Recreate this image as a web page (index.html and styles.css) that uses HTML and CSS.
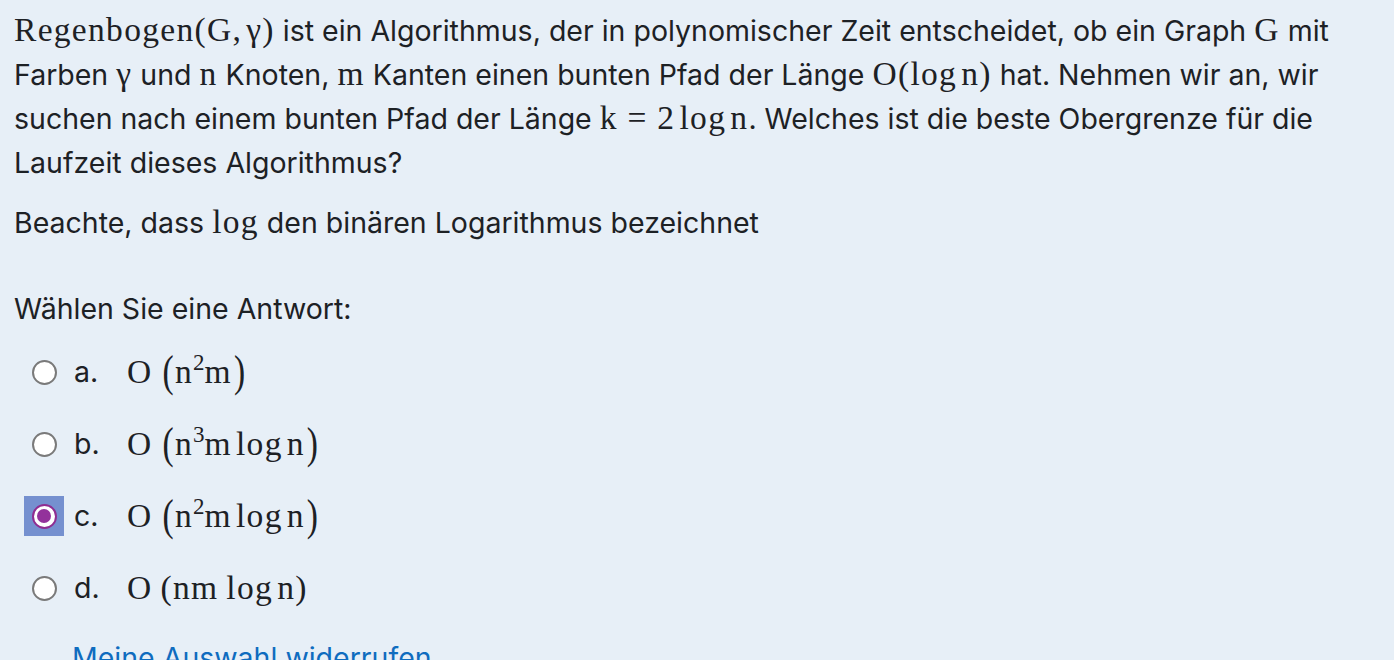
FILE: index.html
```html
<!DOCTYPE html>
<html lang="de">
<head>
<meta charset="utf-8">
<link rel="stylesheet" href="styles.css">
</head>
<body>
<div class="q">
  <p class="text"><span class="m">Regenbogen(G,&#8202;γ)</span> ist ein Algorithmus, der in polynomischer Zeit entscheidet, ob ein Graph <span class="m">G</span> mit Farben <span class="m">γ</span> und <span class="m">n</span> Knoten, <span class="m">m</span> Kanten einen bunten Pfad der Länge <span class="m">O(log&#8202;n)</span> hat. Nehmen wir an, wir suchen nach einem bunten Pfad der Länge <span class="m">k&#8197;=&#8197;2&#8202;log&#8202;n</span>. Welches ist die beste Obergrenze für die Laufzeit dieses Algorithmus?</p>
  <p class="text note">Beachte, dass <span class="m">log</span> den binären Logarithmus bezeichnet</p>
  <div class="prompt">Wählen Sie eine Antwort:</div>
  <div class="answers">
    <div class="opt"><span class="radio"></span><span class="lbl">a.</span><span class="m expr">O&#8201;<span class="paren">(</span>n<sup>2</sup>m<span class="paren">)</span></span></div>
    <div class="opt"><span class="radio"></span><span class="lbl">b.</span><span class="m expr">O&#8201;<span class="paren">(</span>n<sup>3</sup>m&#8202;log&#8202;n<span class="paren">)</span></span></div>
    <div class="opt"><span class="focus"><span class="radio checked"></span></span><span class="lbl">c.</span><span class="m expr">O&#8201;<span class="paren">(</span>n<sup>2</sup>m&#8202;log&#8202;n<span class="paren">)</span></span></div>
    <div class="opt"><span class="radio"></span><span class="lbl">d.</span><span class="m expr">O&#8201;(nm&#8201;log&#8202;n)</span></div>
  </div>
  <a class="reset" href="#">Meine Auswahl widerrufen</a>
</div>
</body>
</html>
```

FILE: styles.css
```css
html, body {
  margin: 0;
  padding: 0;
  background: #e7eff7;
}
body {
  font-family: Inter, "Noto Sans", sans-serif;
  color: #1d2125;
  font-size: 28.5px;
  line-height: 44px;
}
.q {
  padding: 9px 14px 0 14px;
}
.text {
  margin: 0 0 16px 0;
}
.m {
  font-family: "Liberation Serif", "DejaVu Serif", serif;
  font-size: 33.5px;
  letter-spacing: 1.3px;
  line-height: 1;
}
.prompt {
  margin-top: 42px;
  line-height: 44px;
}
.answers {
  margin-top: 5px;
  display: flex;
  flex-direction: column;
}
.opt {
  display: flex;
  align-items: center;
  height: 72px;
  padding-left: 10px;
}
.radio {
  width: 25px;
  height: 25px;
  border: 2px solid #7a7a7a;
  border-radius: 50%;
  background: #fff;
  box-sizing: border-box;
  margin-left: 8px;
  margin-right: 17px;
  flex: none;
}
.focus {
  width: 40px;
  height: 40px;
  background: #7590cf;
  display: flex;
  align-items: center;
  justify-content: center;
  margin-right: 10px;
  flex: none;
}
.focus .radio {
  margin: 0;
}
.radio.checked {
  width: 25px;
  height: 25px;
  border: 2px solid #8f2d91;
  background: #fff;
  position: relative;
}
.radio.checked::after {
  content: "";
  position: absolute;
  left: 3.5px;
  top: 3.5px;
  width: 14px;
  height: 14px;
  border-radius: 50%;
  background: #93329b;
}
.lbl {
  width: 53px;
}
.expr sup {
  font-size: 23px;
  vertical-align: 13px;
  line-height: 0;
  letter-spacing: 0;
}
.paren {
  display: inline-block;
  transform: scaleY(1.3);
  margin-left: 2px;
}
.reset {
  display: block;
  margin-top: 12px;
  margin-left: 58px;
  color: #0f6cbf;
  text-decoration: none;
}
```
